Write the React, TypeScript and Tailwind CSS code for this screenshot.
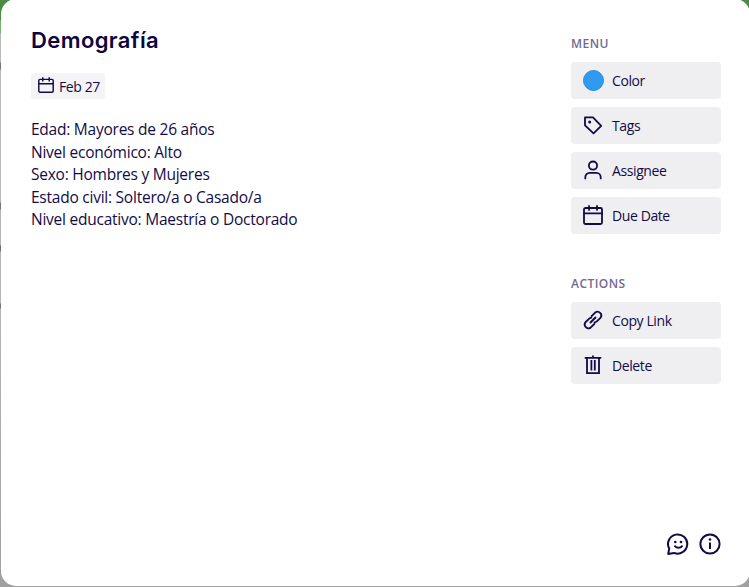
import type { ReactNode } from 'react';

const stroke = {
  fill: 'none',
  stroke: 'currentColor',
  strokeWidth: 1.8,
  strokeLinecap: 'round' as const,
  strokeLinejoin: 'round' as const,
};

function CalendarIcon({ className }: { className: string }) {
  return (
    <svg viewBox="0 0 20 20" className={className} {...stroke}>
      <rect x="1" y="3" width="18" height="16" rx="1.5" />
      <path d="M1 8.4h18M6 .9v4M14 .9v4" />
    </svg>
  );
}

function TagIcon() {
  return (
    <svg viewBox="0 0 20 20" className="size-5" {...stroke}>
      <path d="M2 2.4h8l8.2 8.4-7.7 7.6L2 10.4z" />
      <circle cx="6.7" cy="6.9" r="1.5" fill="currentColor" stroke="none" />
    </svg>
  );
}

function PersonIcon() {
  return (
    <svg viewBox="0 0 20 20" className="size-5" {...stroke}>
      <circle cx="10" cy="5.6" r="4.1" />
      <path d="M2.3 18.4v-1.2a4.3 4.3 0 0 1 4.3-4.3h6.8a4.3 4.3 0 0 1 4.3 4.3v1.2" />
    </svg>
  );
}

function LinkIcon() {
  return (
    <svg viewBox="0 0 20 20" className="size-5" {...stroke} strokeWidth={1.9}>
      <path d="M8.6 6.2l3.6-3.6a3.7 3.7 0 0 1 5.2 5.2l-3.6 3.6a3.7 3.7 0 0 1-2.2 1" />
      <path d="M11.4 13.8l-3.6 3.6a3.7 3.7 0 0 1-5.2-5.2l3.6-3.6a3.7 3.7 0 0 1 2.2-1" />
      <path d="M7.5 12.5l5-5" />
    </svg>
  );
}

function TrashIcon() {
  return (
    <svg viewBox="0 0 20 20" className="size-5" {...stroke} strokeLinecap="butt" strokeLinejoin="miter">
      <path d="M1.7 2.8h16.6M10 .5v2M4 3v15.2h12V3" />
      <path d="M8.4 5v10.5M11.8 5v10.5" />
    </svg>
  );
}

function SmileIcon() {
  return (
    <svg viewBox="0 0 22 22" className="size-[22px]" {...stroke} strokeWidth={2}>
      <path d="M2.2 15.6A9.6 9.6 0 1 1 7 19.9L1.2 20.9z" />
      <path d="M8 13.2c1.6 2.2 5.4 2.2 7 0" />
      <circle cx="8.3" cy="9" r="1.3" fill="currentColor" stroke="none" />
      <circle cx="14" cy="9" r="1.3" fill="currentColor" stroke="none" />
    </svg>
  );
}

function InfoIcon() {
  return (
    <svg viewBox="0 0 22 22" className="size-[22px]" {...stroke} strokeWidth={2}>
      <circle cx="11" cy="11" r="9.6" />
      <path d="M11 9.4v6.6" strokeLinecap="butt" />
      <circle cx="11" cy="6.5" r="1.3" fill="currentColor" stroke="none" />
    </svg>
  );
}

function MenuButton({ icon, children }: { icon: ReactNode; children: ReactNode }) {
  return (
    <button className="flex h-[37px] w-full items-center gap-2 rounded-[4px] bg-[#efeff2] pl-[11px] text-left text-sm tracking-[-0.4px]">
      <span className="-mt-px flex w-[22px] items-center justify-center">{icon}</span>
      <span className="pt-px">{children}</span>
    </button>
  );
}

const details = [
  'Edad: Mayores de 26 años',
  'Nivel económico: Alto',
  'Sexo: Hombres y Mujeres',
  'Estado civil: Soltero/a o Casado/a',
  'Nivel educativo: Maestría o Doctorado',
];

export default function App() {
  return (
    <div className="h-[587px] w-[749px] overflow-hidden bg-[linear-gradient(#4c8b45_0,#4c8b45_20px,#77b46f_21px,#77b46f_33px,#b9b9b9_34px,#b9b9b9_62px,#77738f_63px,#77738f_69px,#b9b9b9_70px,#b9b9b9_202px,#777_203px,#777_209px,#b5b5b5_210px,#b5b5b5_245px,#666_246px,#777_251px,#b5b5b5_252px,#b5b5b5_303px,#777_304px,#777_308px,#b5b5b5_309px,#a0a0a0_100%)] pl-px font-['Open_Sans',sans-serif] text-[#120b48]">
      <main className="-mt-px flex h-[587px] w-[749px] justify-between rounded-[15px] bg-white pl-[30px] pr-[29px]">
        <section className="pt-[26px]">
          <h1 className="font-['Inter',sans-serif] text-[22px] font-semibold leading-[30px] tracking-[0.4px] text-[#0c0540]">Demografía</h1>
          <div className="mt-[18px] flex h-[26px] w-[74px] items-center gap-[5px] rounded-[3px] bg-[#f4f4f7] pl-[7px] text-sm tracking-[-0.4px]">
            <CalendarIcon className="-mt-[3px] size-4" />
            <span className="pt-[2px]">Feb 27</span>
          </div>
          <div className="mt-[19px] text-[15.5px] leading-[22.5px] tracking-[-0.24px]">
            {details.map((line) => (
              <p key={line} className="whitespace-nowrap">{line}</p>
            ))}
          </div>
        </section>
        <aside className="flex w-[150px] flex-col">
          <h2 className="mt-[37px] text-[12px] font-semibold leading-4 tracking-[0.45px] text-[#6f6b91]">MENU</h2>
          <div className="mt-[10px] flex flex-col gap-2">
            <MenuButton icon={<span className="size-[21px] rounded-full border border-[#268bdd] bg-[#2f9bf0]" />}>Color</MenuButton>
            <MenuButton icon={<TagIcon />}>Tags</MenuButton>
            <MenuButton icon={<PersonIcon />}>Assignee</MenuButton>
            <MenuButton icon={<CalendarIcon className="size-5" />}>Due Date</MenuButton>
          </div>
          <h2 className="mt-[42px] text-[12px] font-semibold leading-4 tracking-[0.45px] text-[#6f6b91]">ACTIONS</h2>
          <div className="mt-[10px] flex flex-col gap-2">
            <MenuButton icon={<LinkIcon />}>Copy Link</MenuButton>
            <MenuButton icon={<TrashIcon />}>Delete</MenuButton>
          </div>
          <div className="mb-[31px] mt-auto flex justify-end gap-[10px]">
            <SmileIcon />
            <InfoIcon />
          </div>
        </aside>
      </main>
    </div>
  );
}
